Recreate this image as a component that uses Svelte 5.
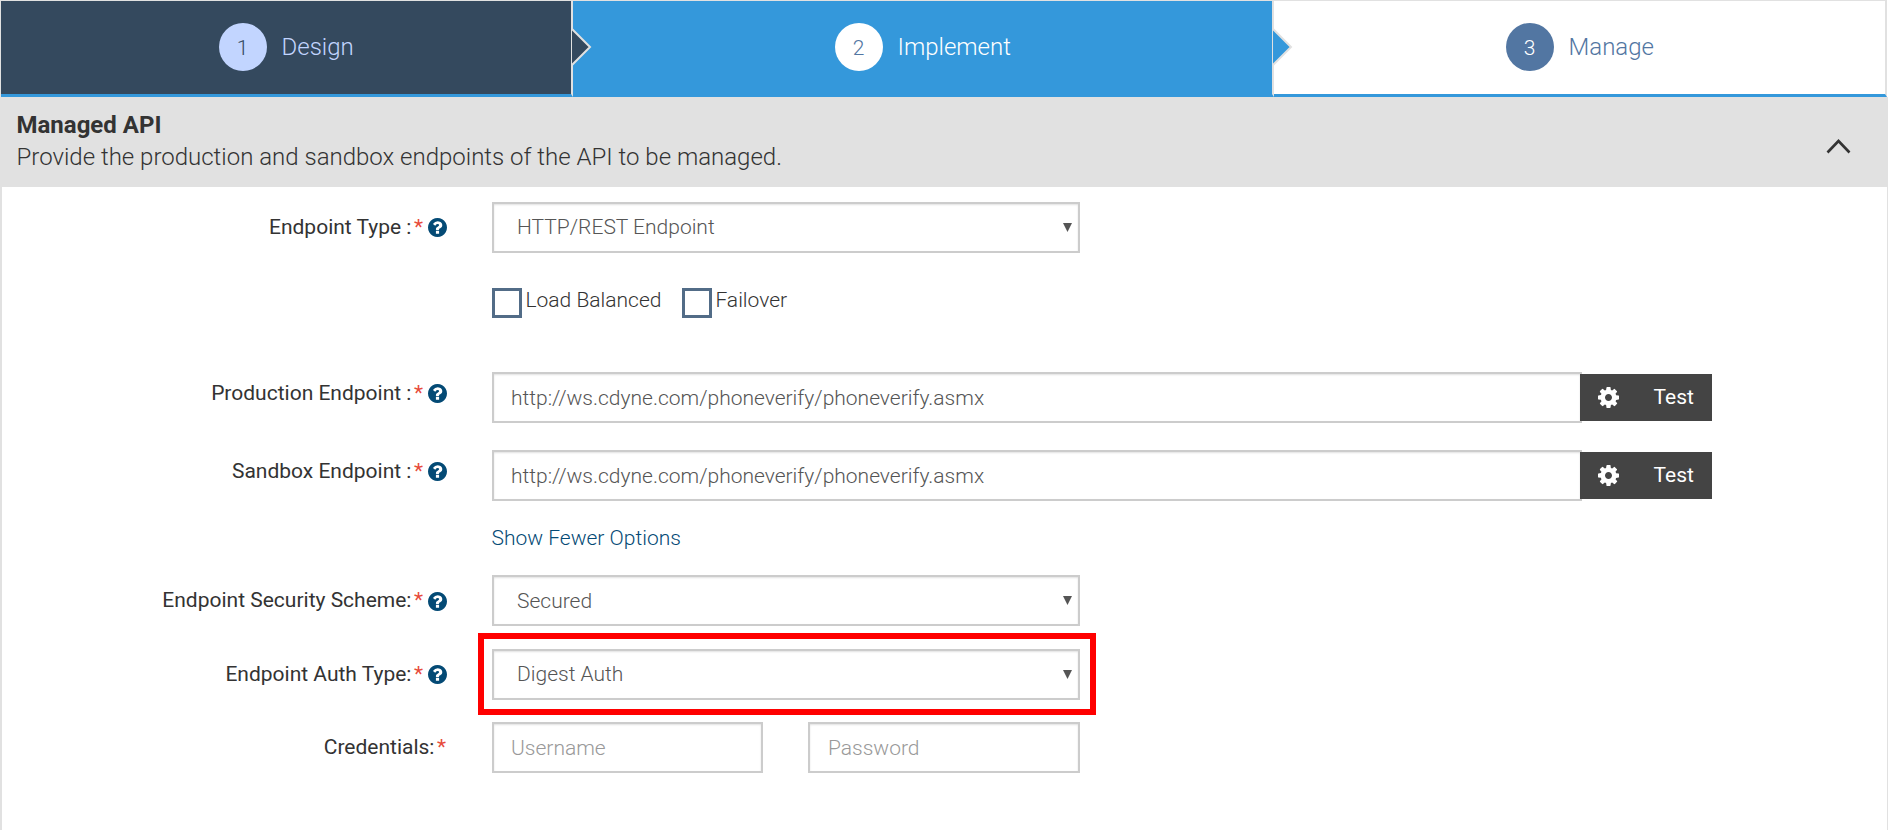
<script>
  const url = 'http://ws.cdyne.com/phoneverify/phoneverify.asmx';
  let production = $state(url);
  let sandbox = $state(url);
</script>

{#snippet help()}
  <svg class="help" viewBox="128 128 1536 1536" aria-hidden="true"><path d="M1024 1376v-192q0-14-9-23t-23-9h-192q-14 0-23 9t-9 23v192q0 14 9 23t23 9h192q14 0 23-9t9-23zM1280 704q0-88-55.5-163t-138.5-116-170-41q-243 0-371 213-15 24 8 42l132 100q7 6 19 6 16 0 25-12 53-68 86-92 34-24 86-24 48 0 85.5 26t37.5 59q0 38-20 61t-68 45q-63 28-115.5 86.5t-52.5 125.5v36q0 14 9 23t23 9h192q14 0 23-9t9-23q0-19 21.5-49.5t54.5-49.5q32-18 49-28.5t46-35 44.5-48 28-60.5 12.5-81zM1664 896q0 209-103 385.5t-279.5 279.5-385.5 103-385.5-103-279.5-279.5-103-385.5 103-385.5 279.5-279.5 385.5-103 385.5 103 279.5 279.5 103 385.5z"/></svg>
{/snippet}

{#snippet label(text, withHelp = true)}
  <div class="label"><span>{text}</span><span class="star">*</span>{#if withHelp}{@render help()}{/if}</div>
{/snippet}

{#snippet select(text)}
  <div class="box select"><span>{text}</span><svg class="caret" viewBox="0 0 9 9"><path d="M0 0h9L4.5 9z"/></svg></div>
{/snippet}

{#snippet test()}
  <button class="test">
    <svg class="gear" viewBox="128 128 1536 1536"><path d="M1152 896q0-106-75-181t-181-75-181 75-75 181 75 181 181 75 181-75 75-181zm512-109v222q0 12-8 23t-20 13l-185 28q-19 54-39 91 35 50 107 138 10 12 10 25t-9 23q-27 37-99 108t-94 71q-12 0-26-9l-138-108q-44 23-91 38-16 136-29 186-7 28-36 28h-222q-14 0-24.5-8.5t-11.5-21.5l-28-184q-49-16-90-37l-141 107q-10 9-25 9-14 0-25-11-126-114-165-168-7-10-7-23 0-12 8-23 15-21 51-66.5t54-70.5q-27-50-41-99l-183-27q-13-2-21-12.5t-8-23.5v-222q0-12 8-23t19-13l186-28q14-46 39-92-40-57-107-138-10-12-10-24 0-10 9-23 26-36 98.5-107.5t94.5-71.5q13 0 26 10l138 107q44-23 91-38 16-136 29-186 7-28 36-28h222q14 0 24.5 8.5t11.5 21.5l28 184q49 16 90 37l142-107q9-9 24-9 13 0 25 10 129 119 165 170 7 8 7 22 0 12-8 23-15 21-51 66.5t-54 70.5q26 50 41 98l183 28q13 2 21 12.5t8 23.5z"/></svg>
    <span>Test</span>
  </button>
{/snippet}

{#snippet notch()}
  <svg class="notch" viewBox="0 0 21 40"><path d="M0 2L18 20L0 38" /></svg>
{/snippet}

<div class="page">
  <nav class="steps">
    <div class="step design"><span class="num">1</span><span>Design</span>{@render notch()}</div>
    <div class="step implement"><span class="num">2</span><span>Implement</span>{@render notch()}</div>
    <div class="step manage"><span class="num">3</span><span>Manage</span></div>
  </nav>

  <div class="panel">
    <header>
      <div>
        <h1>Managed API</h1>
        <p>Provide the production and sandbox endpoints of the API to be managed.</p>
      </div>
      <svg class="chevron" viewBox="0 0 25 15"><path d="M1.5 13.5L12.5 2L23.5 13.5"/></svg>
    </header>

    <div class="form">
      <div class="row type">
        {@render label('Endpoint Type :')}
        {@render select('HTTP/REST Endpoint')}
      </div>
      <div class="checks">
        <div class="check"><i></i><span>Load Balanced</span></div>
        <div class="check"><i></i><span>Failover</span></div>
      </div>
      <div class="row endpoint production">
        {@render label('Production Endpoint :')}
        <input class="box url" bind:value={production} />
        {@render test()}
      </div>
      <div class="row endpoint sandbox">
        {@render label('Sandbox Endpoint :')}
        <input class="box url" bind:value={sandbox} />
        {@render test()}
      </div>
      <div class="more"><a href="#options">Show Fewer Options</a></div>
      <div class="row security">
        {@render label('Endpoint Security Scheme:')}
        {@render select('Secured')}
      </div>
      <div class="row auth">
        {@render label('Endpoint Auth Type:')}
        <div class="marked">{@render select('Digest Auth')}</div>
      </div>
      <div class="row credentials">
        {@render label('Credentials:', false)}
        <input class="box username" placeholder="Username" />
        <input class="box password" placeholder="Password" />
      </div>
    </div>
  </div>
</div>

<style>
  :global(body) { margin: 0; background: #fff; overflow: hidden; }
  .page, .page * { box-sizing: border-box; }
  .page {
    width: 1889px;
    height: 830px;
    font: 300 21px/24px Roboto, sans-serif;
    color: #333;
    overflow: hidden;
  }
  .steps {
    display: flex;
    width: 1887px;
    height: 97px;
    border-top: 1px solid #e1e1e1;
    border-left: 1px solid #e1e1e1;
  }
  .step {
    position: relative;
    display: flex;
    align-items: center;
    height: 96px;
    padding-bottom: 1px;
    gap: 14.5px;
    font-size: 24px;
    line-height: 28px;
    border-right: 2px solid #e1e1e1;
    border-bottom: 3px solid #3498db;
  }
  .design { width: 572px; padding-left: 218px; background: #34495e; color: #c2d5ff; }
  .implement { width: 701px; padding-left: 262px; background: #3498db; color: #fff; }
  .manage { width: 613px; padding-left: 232px; background: #fff; color: #5276a2; }
  .num {
    display: flex;
    align-items: center;
    justify-content: center;
    width: 48px;
    height: 48px;
    padding: 1px 1px 0 0;
    border-radius: 50%;
    font-size: 21px;
  }
  .design .num { background: #c2d5ff; color: #34495e; }
  .implement .num { background: #fff; color: #5276a2; }
  .manage .num { background: #5276a2; color: #fff; }
  .notch {
    position: absolute;
    z-index: 1;
    right: -22px;
    top: 26px;
    width: 21px;
    height: 40px;
    stroke: #e1e1e1;
    stroke-width: 2;
  }
  .design .notch { fill: #34495e; }
  .implement .notch { fill: #3498db; }
  .panel {
    width: 1888px;
    height: 733px;
    border-left: 2px solid #e1e1e1;
    border-right: 1px solid #e1e1e1;
  }
  header {
    display: flex;
    justify-content: space-between;
    height: 90px;
    padding: 12px 36px 0 14.5px;
    background: #e1e1e1;
  }
  h1 { margin: 0; font-size: 24px; font-weight: 700; line-height: 32px; }
  p { margin: 0; font-size: 24px; line-height: 32px; }
  .chevron { width: 25px; height: 15px; margin-top: 30px; fill: none; stroke: #333; stroke-width: 2.6; }
  .form { padding-top: 15px; }
  .row { display: flex; height: 51px; }
  .label {
    display: flex;
    justify-content: flex-end;
    width: 445px;
    margin-right: 45px;
    padding-top: 13px;
    font-weight: 400;
  }
  .endpoint .label { padding-top: 9px; }
  .credentials .label { padding-right: 1px; }
  .star { margin-left: 2.5px; color: #e74c3c; }
  .help { width: 19px; height: 19px; margin: 2.5px 0 0 5px; fill: #044a75; }
  .security .help { margin-top: 3.5px; }
  .box {
    height: 51px;
    margin: 0;
    border: 2px solid #ccc;
    border-radius: 0;
    background: #fff;
    box-shadow: inset 0 1px 2px rgba(0, 0, 0, .12);
    color: #555;
    font: inherit;
    outline: none;
  }
  input.box { padding: 1px 17px 0; }
  .box::placeholder { color: #999; opacity: 1; }
  .select {
    display: flex;
    justify-content: space-between;
    width: 588px;
    padding: 11px 6px 0 23px;
  }
  .security .select { padding-top: 12px; }
  .caret { width: 9px; height: 9px; margin-top: 8px; fill: #555; }
  .security .caret { margin-top: 7px; }
  .checks { display: flex; gap: 20.5px; margin: 35px 0 0 490px; height: 30px; }
  .check { display: flex; gap: 3.5px; }
  .check i { width: 30px; height: 30px; border: 3px solid #526c87; background: #fff; }
  .check span { white-space: nowrap; }
  .production { margin-top: 54px; }
  .sandbox { margin-top: 27px; }
  .url { width: 1090px; }
  .test {
    display: flex;
    width: 132px;
    height: 47px;
    margin: 2px 0 0 -2px;
    padding: 11px 0 0 18px;
    border: 0;
    background: #444;
    color: #fff;
    font: 400 21px/24px Roboto, sans-serif;
    z-index: 1;
  }
  .gear { width: 21px; height: 21px; margin: 2px 34.5px 0 0; fill: #fff; }
  .more { height: 74px; padding: 25px 0 0 489.5px; }
  a { color: #044a75; text-decoration: none; }
  .auth { margin-top: 23px; }
  .marked { position: relative; }
  .marked::after {
    content: '';
    position: absolute;
    box-sizing: border-box;
    left: -14px;
    top: -16px;
    width: 618px;
    height: 82px;
    border: 6px solid #f00;
    pointer-events: none;
  }
  .credentials { margin-top: 22px; }
  .username { width: 271px; }
  input.password { width: 272px; margin-left: 45px; padding-left: 18px; }
</style>
